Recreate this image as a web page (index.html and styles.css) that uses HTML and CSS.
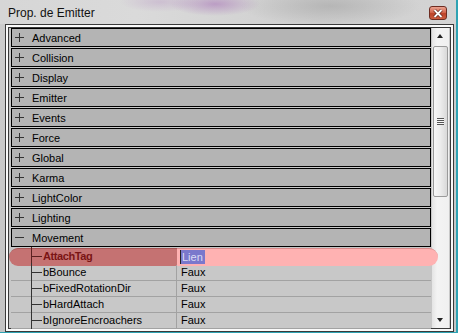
FILE: index.html
```html
<!DOCTYPE html>
<html lang="fr">
<head>
    <meta charset="UTF-8">
    <meta name="viewport" content="width=device-width, initial-scale=1.0">
    <title>Prop. de Emitter</title>
    <link rel="stylesheet" href="styles.css">
</head>
<body>
    <div class="window">
        <div class="titlebar">
            <span class="title">Prop. de Emitter</span>
            <span class="close">
                <svg width="10" height="9" viewBox="0 0 10 9">
                    <path d="M1.5 1 L8.5 8 M8.5 1 L1.5 8" stroke="#5a2018" stroke-width="3.2"/>
                    <path d="M1.5 1 L8.5 8 M8.5 1 L1.5 8" stroke="#fff" stroke-width="1.8"/>
                </svg>
            </span>
        </div>

        <div class="panel">
            <div class="list">
                <div class="rows">
                    <div class="cat"><span class="sign plus"></span>Advanced</div>
                    <div class="cat"><span class="sign plus"></span>Collision</div>
                    <div class="cat"><span class="sign plus"></span>Display</div>
                    <div class="cat"><span class="sign plus"></span>Emitter</div>
                    <div class="cat"><span class="sign plus"></span>Events</div>
                    <div class="cat"><span class="sign plus"></span>Force</div>
                    <div class="cat"><span class="sign plus"></span>Global</div>
                    <div class="cat"><span class="sign plus"></span>Karma</div>
                    <div class="cat"><span class="sign plus"></span>LightColor</div>
                    <div class="cat"><span class="sign plus"></span>Lighting</div>
                    <div class="cat open"><span class="sign"></span>Movement</div>

                    <div class="prop selected">
                        <span class="name">AttachTag</span>
                        <span class="value"><span class="edit">Lien</span></span>
                    </div>
                    <div class="prop">
                        <span class="name">bBounce</span>
                        <span class="value">Faux</span>
                    </div>
                    <div class="prop">
                        <span class="name">bFixedRotationDir</span>
                        <span class="value">Faux</span>
                    </div>
                    <div class="prop">
                        <span class="name">bHardAttach</span>
                        <span class="value">Faux</span>
                    </div>
                    <div class="prop">
                        <span class="name">bIgnoreEncroachers</span>
                        <span class="value">Faux</span>
                    </div>
                </div>

                <div class="scrollbar">
                    <div class="arrow up"></div>
                    <div class="thumb"><span class="grip"></span></div>
                    <div class="track"></div>
                    <div class="arrow down"></div>
                </div>
            </div>
        </div>
    </div>
</body>
</html>
```

FILE: styles.css
```css
body {
    margin: 0;
    background-color: #2fa3b3;
    font-family: "Liberation Sans", Arial, sans-serif;
}
.window {
    width: 456px;
    height: 332px;
    background: linear-gradient(to bottom, #cdcdcd, #c4c4c4);
}
.titlebar {
    height: 24px;
    display: flex;
    align-items: center;
    justify-content: space-between;
    padding: 0 9px 0 8px;
    box-sizing: border-box;
    background:
        radial-gradient(ellipse 45px 12px at 215px 4px, rgba(170, 120, 185, 0.6), transparent),
        radial-gradient(ellipse 40px 10px at 160px 2px, rgba(190, 160, 200, 0.45), transparent),
        radial-gradient(ellipse 90px 20px at 330px 6px, rgba(165, 165, 165, 0.6), transparent),
        linear-gradient(to right, #d6d6d6, #dadada 30%, #cfcfcf 70%, #d4d4d4);
}
.title {
    font-size: 12px;
    color: #111;
    margin-top: 1px;
}
.close {
    width: 18px;
    height: 14px;
    margin-top: 2px;
    display: flex;
    align-items: center;
    justify-content: center;
    box-sizing: border-box;
    border: 1px solid #6e2d22;
    border-radius: 3px;
    background: linear-gradient(to bottom, #eba391, #d4684f 45%, #bd4329 55%, #cc5d40);
}
.panel {
    width: 449px;
    height: 308px;
    margin-left: 5px;
    box-sizing: border-box;
    border: 1px solid #3a3a3a;
    padding: 2px;
    background: #fafafa;
}
.list {
    height: 302px;
    box-sizing: border-box;
    border: 1px solid #3a3a3a;
    padding: 0 1px 0 1px;
    background: #c8c8c8;
    display: flex;
    gap: 1px;
}
.rows {
    width: 421px;
    margin-left: 1px;
    height: 300px;
    position: relative;
}
.cat {
    height: 19px;
    margin-bottom: 1px;
    box-sizing: border-box;
    border: 1px solid #000;
    background: #b4b4b4;
    display: flex;
    align-items: center;
    font-size: 11px;
    color: #000;
}
.cat.open {
    margin-bottom: 2px;
}
.sign {
    width: 9px;
    height: 9px;
    margin: 0 8px 0 3px;
    position: relative;
}
.sign::before,
.plus::after {
    content: "";
    position: absolute;
    background: #333;
}
.sign::before {
    left: 0;
    right: 0;
    top: 4px;
    height: 1px;
}
.plus::after {
    top: 0;
    bottom: 0;
    left: 4px;
    width: 1px;
}
.prop {
    height: 16px;
    box-sizing: border-box;
    border-bottom: 1px solid #a2a2a2;
    display: grid;
    grid-template-columns: 166px 1fr;
    font-size: 11px;
    position: relative;
}
.prop::before {
    content: "";
    position: absolute;
    left: 20px;
    top: -2px;
    bottom: -1px;
    width: 1px;
    background: #333;
    z-index: 3;
}
.prop::after {
    content: "";
    position: absolute;
    left: 20px;
    top: 7px;
    width: 11px;
    height: 1px;
    background: #333;
    z-index: 3;
}
.name {
    padding-left: 32px;
    line-height: 15px;
    border-right: 1px solid #a2a2a2;
    position: relative;
    z-index: 2;
}
.value {
    padding-left: 4px;
    line-height: 15px;
    position: relative;
    z-index: 2;
}
.selected {
    border-bottom-color: transparent;
}
.selected::before {
    background: #5a2020;
}
.selected::after {
    background: #5a2020;
}
.selected .name {
    font-weight: bold;
    color: #7a1414;
    border-right-color: transparent;
    letter-spacing: -0.4px;
}
.rows .selected .name::before {
    content: "";
    position: absolute;
    left: -2px;
    top: -1px;
    width: 168px;
    height: 17px;
    border-top: 1px solid #a85656;
    border-radius: 9px 0 0 9px;
    background: #c57272;
    z-index: -1;
}
.rows .selected .value::after {
    content: "";
    position: absolute;
    left: 0;
    top: -1px;
    width: 261px;
    height: 17px;
    border-top: 1px solid #d88a8a;
    border-radius: 0 9px 9px 0;
    background: #ffb2b2;
    z-index: -1;
}
.edit {
    display: inline-block;
    margin-left: -1px;
    padding: 0 2px 0 1px;
    line-height: 14px;
    margin-top: 1px;
    background: #7a78cc;
    color: #dcdcf4;
    border-left: 1px solid #222;
}
.scrollbar {
    width: 17px;
    height: 300px;
    display: flex;
    flex-direction: column;
    background: linear-gradient(to right, #e4e4e4, #f3f3f3 30%, #f0f0f0);
}
.arrow {
    height: 17px;
    position: relative;
}
.arrow::before {
    content: "";
    position: absolute;
    left: 5px;
    top: 6px;
    border-left: 3.5px solid transparent;
    border-right: 3.5px solid transparent;
}
.up::before {
    border-bottom: 4px solid #222;
}
.down::before {
    top: 7px;
    border-top: 4px solid #222;
}
.thumb {
    height: 151px;
    margin: 1px 1px 0 1px;
    box-sizing: border-box;
    border: 1px solid #9a9a9a;
    border-radius: 2px;
    background: linear-gradient(to right, #f7f7f7, #ececec 50%, #d9d9d9);
    display: flex;
    align-items: center;
    justify-content: center;
}
.grip {
    width: 7px;
    height: 7px;
    background: repeating-linear-gradient(to bottom, #555 0 1px, #f8f8f8 1px 2px);
}
.track {
    flex: 1;
}
```
